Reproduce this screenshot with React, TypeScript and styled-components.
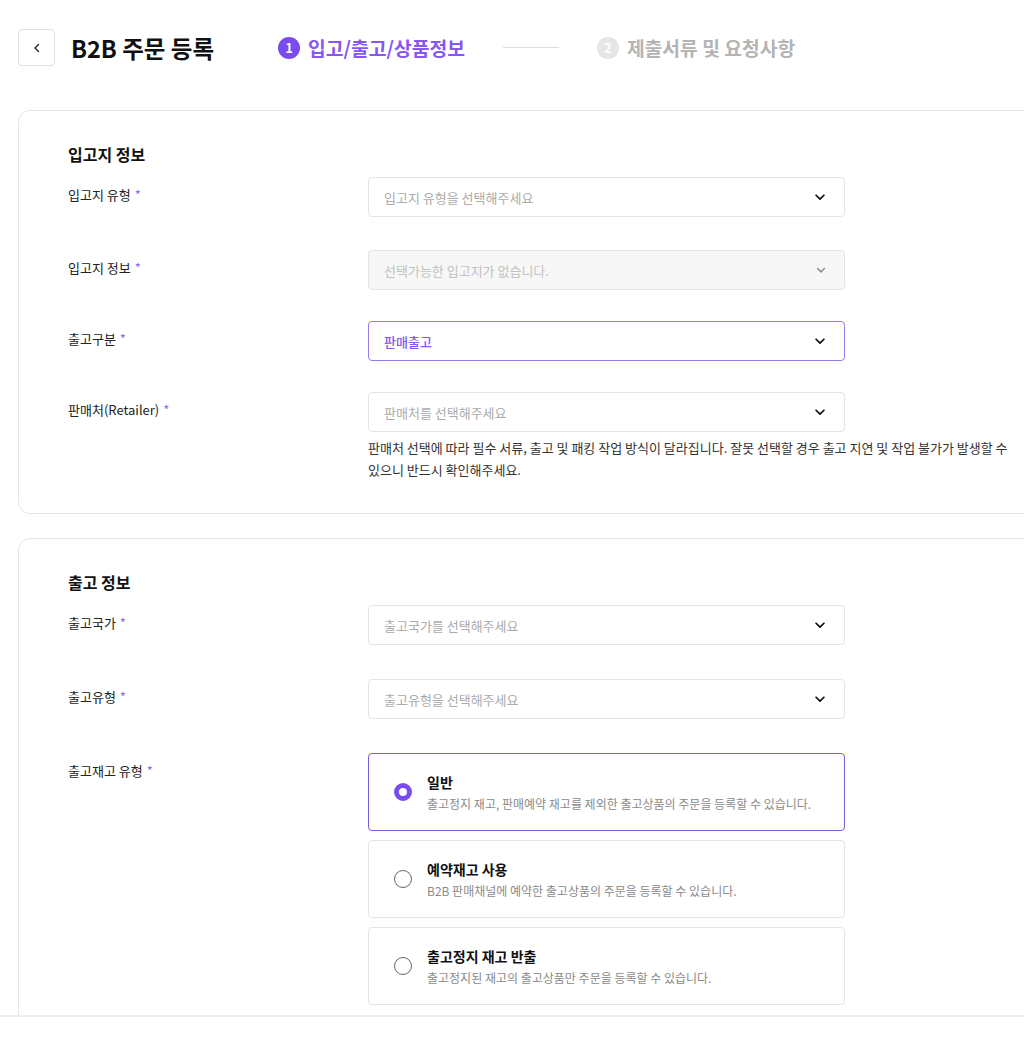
import React from 'react';
import styled, { createGlobalStyle } from 'styled-components';

const GlobalStyle = createGlobalStyle`
  html, body {
    margin: 0;
    padding: 0;
    background: #fff;
  }
  body {
    font-family: "Noto Sans CJK KR", "Noto Sans", sans-serif;
    color: #222;
    -webkit-font-smoothing: antialiased;
  }
  * {
    box-sizing: border-box;
  }
`;

const purple = '#7a4cf0';

// Layout
const Page = styled.div`
  height: 100vh;
  display: flex;
  flex-direction: column;
  overflow: hidden;
`;

const Main = styled.div`
  flex: 1;
  min-height: 0;
  overflow: hidden;
  padding: 29px 0 0 18px;
`;

const Footer = styled.div`
  height: 28px;
  border-top: 2px solid #eeeeee;
  background: #fff;
`;

// Header
const Header = styled.div`
  display: flex;
  align-items: center;
  height: 37px;
  margin-bottom: 44px;
`;

const BackButton = styled.button`
  width: 37px;
  height: 37px;
  border: 1px solid #e0e0e0;
  border-radius: 4px;
  background: #fff;
  display: flex;
  align-items: center;
  justify-content: center;
  padding: 0;
  margin-right: 16px;
  cursor: pointer;
`;

const PageTitle = styled.h1`
  margin: 0 64px 0 0;
  font-size: 23.5px;
  font-weight: 700;
  color: #111;
`;

const Steps = styled.div`
  display: flex;
  align-items: center;
`;

const Step = styled.div<{ $active?: boolean }>`
  display: flex;
  align-items: center;
  gap: 8px;
  font-size: 19.3px;
  font-weight: 700;
  color: ${(p) => (p.$active ? '#8757f2' : '#b4b4b4')};
`;

const StepNumber = styled.span<{ $active?: boolean }>`
  width: 22px;
  height: 22px;
  border-radius: 50%;
  background: ${(p) => (p.$active ? purple : '#e6e6e6')};
  color: #fff;
  font-size: 13px;
  font-weight: 700;
  display: flex;
  align-items: center;
  justify-content: center;
`;

const StepLine = styled.div`
  width: 56px;
  height: 1px;
  background: #dddddd;
  margin: 0 38px;
`;

// Cards
const Card = styled.section`
  margin-right: -20px;
  border: 1px solid #e6e6e6;
  border-radius: 12px;
  padding: 32px 0 32px 49px;
  margin-bottom: 24px;
  background: #fff;
`;

const SectionTitle = styled.h2`
  margin: 0 0 12px;
  font-size: 16px;
  line-height: 22px;
  font-weight: 700;
  color: #111;
`;

const Row = styled.div<{ $gap?: number }>`
  display: flex;
  align-items: flex-start;
  margin-top: ${(p) => p.$gap ?? 0}px;
`;

const Label = styled.div`
  width: 300px;
  flex: 0 0 300px;
  height: 40px;
  font-size: 13px;
  line-height: 36px;
  color: #222;
`;

const Required = styled.span`
  color: #8b6cf0;
  margin-left: 4px;
`;

const Field = styled.div`
  display: flex;
  flex-direction: column;
`;

const Select = styled.div<{ $disabled?: boolean; $focused?: boolean }>`
  width: 477px;
  height: 40px;
  border: 1px solid ${(p) => (p.$focused ? '#9a78f2' : '#e4e4e4')};
  border-radius: 4px;
  background: ${(p) => (p.$disabled ? '#f7f7f7' : '#fff')};
  display: flex;
  align-items: center;
  justify-content: space-between;
  padding: 0 17px 0 15px;
`;

const SelectText = styled.span<{ $disabled?: boolean; $selected?: boolean }>`
  font-size: 13px;
  color: ${(p) =>
    p.$selected ? '#8757f2' : p.$disabled ? '#c2c2c2' : '#ababab'};
  font-weight: ${(p) => (p.$selected ? 500 : 400)};
`;

const HelperText = styled.p`
  margin: 5px 0 0;
  font-size: 13px;
  line-height: 22px;
  color: #333;
  white-space: nowrap;
`;

// Radio options
const RadioList = styled.div`
  display: flex;
  flex-direction: column;
  gap: 9px;
`;

const RadioCard = styled.label<{ $checked?: boolean }>`
  width: 477px;
  height: 78px;
  border: 1px solid ${(p) => (p.$checked ? '#7c5bd8' : '#e4e4e4')};
  border-radius: 4px;
  display: flex;
  align-items: center;
  padding-left: 25px;
  gap: 15px;
  cursor: pointer;
`;

const RadioCircle = styled.span<{ $checked?: boolean }>`
  width: 18px;
  height: 18px;
  flex: 0 0 18px;
  border-radius: 50%;
  border: ${(p) => (p.$checked ? `5px solid ${purple}` : '1.5px solid #666')};
  background: #fff;
`;

const RadioBody = styled.div`
  display: flex;
  flex-direction: column;
  gap: 3px;
`;

const RadioTitle = styled.span`
  font-size: 14px;
  line-height: 20px;
  font-weight: 700;
  color: #111;
`;

const RadioDesc = styled.span`
  font-size: 12px;
  line-height: 18px;
  color: #8a8a8a;
`;

const Chevron = ({ color = '#111', size = 14 }: { color?: string; size?: number }) => (
  <svg width={size} height={size} viewBox="0 0 16 16" fill="none">
    <path d="M3.5 6l4.5 4.5L12.5 6" stroke={color} strokeWidth="2" strokeLinecap="round" strokeLinejoin="round" />
  </svg>
);

const BackIcon = () => (
  <svg width="12" height="12" viewBox="0 0 12 12" fill="none">
    <path d="M7.5 2.5L4 6l3.5 3.5" stroke="#222" strokeWidth="1.4" strokeLinecap="round" strokeLinejoin="round" />
  </svg>
);

interface SelectProps {
  text: string;
  disabled?: boolean;
  selected?: boolean;
}

const SelectBox = ({ text, disabled, selected }: SelectProps) => (
  <Select $disabled={disabled} $focused={selected}>
    <SelectText $disabled={disabled} $selected={selected}>{text}</SelectText>
    {disabled ? <Chevron color="#8f8f8f" size={12} /> : <Chevron />}
  </Select>
);

const stockTypes = [
  { title: '일반', desc: '출고정지 재고, 판매예약 재고를 제외한 출고상품의 주문을 등록할 수 있습니다.', checked: true },
  { title: '예약재고 사용', desc: 'B2B 판매채널에 예약한 출고상품의 주문을 등록할 수 있습니다.', checked: false },
  { title: '출고정지 재고 반출', desc: '출고정지된 재고의 출고상품만 주문을 등록할 수 있습니다.', checked: false },
];

export default function App() {
  return (
    <Page>
      <GlobalStyle />
      <Main>
        <Header>
          <BackButton>
            <BackIcon />
          </BackButton>
          <PageTitle>B2B 주문 등록</PageTitle>
          <Steps>
            <Step $active>
              <StepNumber $active>1</StepNumber>
              입고/출고/상품정보
            </Step>
            <StepLine />
            <Step>
              <StepNumber>2</StepNumber>
              제출서류 및 요청사항
            </Step>
          </Steps>
        </Header>

        <Card>
          <SectionTitle>입고지 정보</SectionTitle>
          <Row>
            <Label>입고지 유형<Required>*</Required></Label>
            <SelectBox text="입고지 유형을 선택해주세요" />
          </Row>
          <Row $gap={33}>
            <Label>입고지 정보<Required>*</Required></Label>
            <SelectBox text="선택가능한 입고지가 없습니다." disabled />
          </Row>
          <Row $gap={31}>
            <Label>출고구분<Required>*</Required></Label>
            <SelectBox text="판매출고" selected />
          </Row>
          <Row $gap={31}>
            <Label>판매처(Retailer)<Required>*</Required></Label>
            <Field>
              <SelectBox text="판매처를 선택해주세요" />
              <HelperText>
                판매처 선택에 따라 필수 서류, 출고 및 패킹 작업 방식이 달라집니다. 잘못 선택할 경우 출고 지연 및 작업 불가가 발생할 수
                <br />
                있으니 반드시 확인해주세요.
              </HelperText>
            </Field>
          </Row>
        </Card>

        <Card>
          <SectionTitle>출고 정보</SectionTitle>
          <Row>
            <Label>출고국가<Required>*</Required></Label>
            <SelectBox text="출고국가를 선택해주세요" />
          </Row>
          <Row $gap={34}>
            <Label>출고유형<Required>*</Required></Label>
            <SelectBox text="출고유형을 선택해주세요" />
          </Row>
          <Row $gap={34}>
            <Label>출고재고 유형<Required>*</Required></Label>
            <RadioList>
              {stockTypes.map((s) => (
                <RadioCard key={s.title} $checked={s.checked}>
                  <RadioCircle $checked={s.checked} />
                  <RadioBody>
                    <RadioTitle>{s.title}</RadioTitle>
                    <RadioDesc>{s.desc}</RadioDesc>
                  </RadioBody>
                </RadioCard>
              ))}
            </RadioList>
          </Row>
        </Card>
      </Main>
      <Footer />
    </Page>
  );
}
